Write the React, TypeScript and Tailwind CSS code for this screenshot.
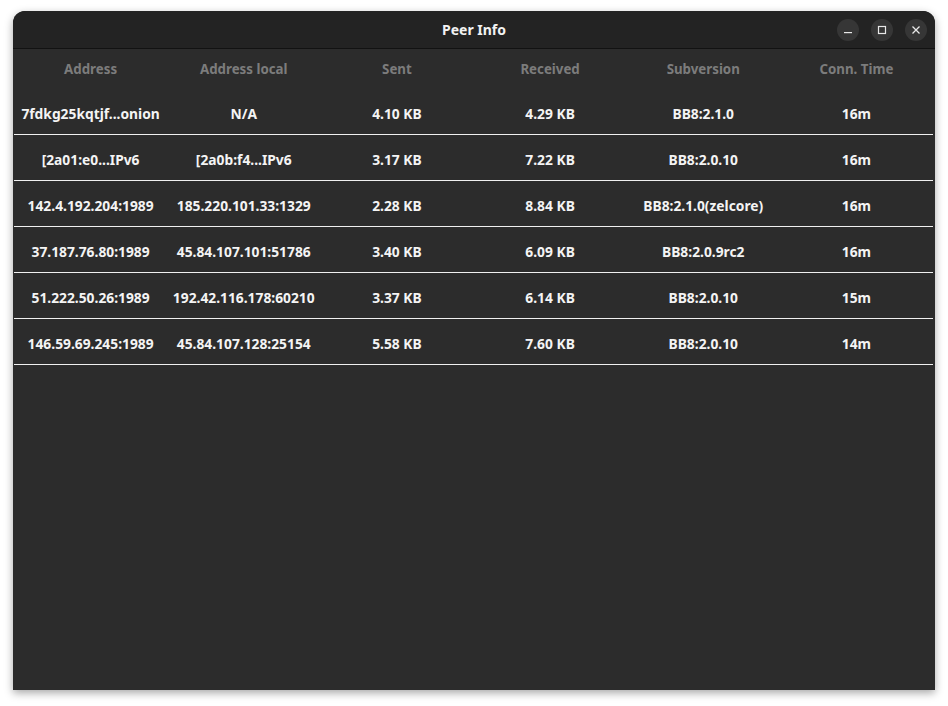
import React from "react";

const cols = ["Address", "Address local", "Sent", "Received", "Subversion", "Conn. Time"];
const rows = [
  ["7fdkg25kqtjf...onion", "N/A", "4.10 KB", "4.29 KB", "BB8:2.1.0", "16m"],
  ["[2a01:e0...IPv6", "[2a0b:f4...IPv6", "3.17 KB", "7.22 KB", "BB8:2.0.10", "16m"],
  ["142.4.192.204:1989", "185.220.101.33:1329", "2.28 KB", "8.84 KB", "BB8:2.1.0(zelcore)", "16m"],
  ["37.187.76.80:1989", "45.84.107.101:51786", "3.40 KB", "6.09 KB", "BB8:2.0.9rc2", "16m"],
  ["51.222.50.26:1989", "192.42.116.178:60210", "3.37 KB", "6.14 KB", "BB8:2.0.10", "15m"],
  ["146.59.69.245:1989", "45.84.107.128:25154", "5.58 KB", "7.60 KB", "BB8:2.0.10", "14m"],
];

export default function App() {
  return (
    <div
      className="w-[948px] h-[706px] bg-white pt-[11px] pl-[13px]"
      style={{ fontFamily: '"Noto Sans", "Open Sans", sans-serif' }}
    >
      <div className="w-[922px] h-[679px] rounded-t-[12px] overflow-hidden bg-[#2c2c2c] shadow-[0_3px_9px_rgba(0,0,0,0.35)] flex flex-col">
        <div className="relative h-[38px] shrink-0 bg-[#232323] border-b border-[#121212] flex items-center justify-center">
          <span className="text-[14px] font-bold text-[#f2f2f2]">Peer Info</span>
          <div className="absolute right-[8px] top-[8px] flex gap-[12px]">
            <div className="w-[22px] h-[22px] rounded-full bg-[#363636] flex items-center justify-center">
              <svg width="10" height="10" viewBox="0 0 10 10">
                <rect x="1" y="7" width="8" height="1.2" fill="#e8e8e8" />
              </svg>
            </div>
            <div className="w-[22px] h-[22px] rounded-full bg-[#363636] flex items-center justify-center">
              <svg width="10" height="10" viewBox="0 0 10 10">
                <rect x="1.5" y="1.5" width="7" height="7" fill="none" stroke="#e8e8e8" strokeWidth="1.2" />
              </svg>
            </div>
            <div className="w-[22px] h-[22px] rounded-full bg-[#363636] flex items-center justify-center">
              <svg width="10" height="10" viewBox="0 0 10 10">
                <path d="M1.5 1.5 L8.5 8.5 M8.5 1.5 L1.5 8.5" stroke="#e8e8e8" strokeWidth="1.3" />
              </svg>
            </div>
          </div>
        </div>
        <div className="flex flex-col pr-[2px] pl-[1px]">
          <div className="grid grid-cols-6 h-[40px] items-center">
            {cols.map((c) => (
              <div key={c} className="text-center text-[13.3px] font-bold text-[#7c7c7c] leading-[18px]">
                {c}
              </div>
            ))}
          </div>
          {rows.map((r, i) => (
            <div key={i} className="grid grid-cols-6 h-[46px] pt-[16px] border-b border-[#f0f0f0]">
              {r.map((v, j) => (
                <div key={j} className="text-center text-[13.8px] font-bold text-[#f4f4f4] leading-[18px] whitespace-nowrap">
                  {v}
                </div>
              ))}
            </div>
          ))}
        </div>
      </div>
    </div>
  );
}
